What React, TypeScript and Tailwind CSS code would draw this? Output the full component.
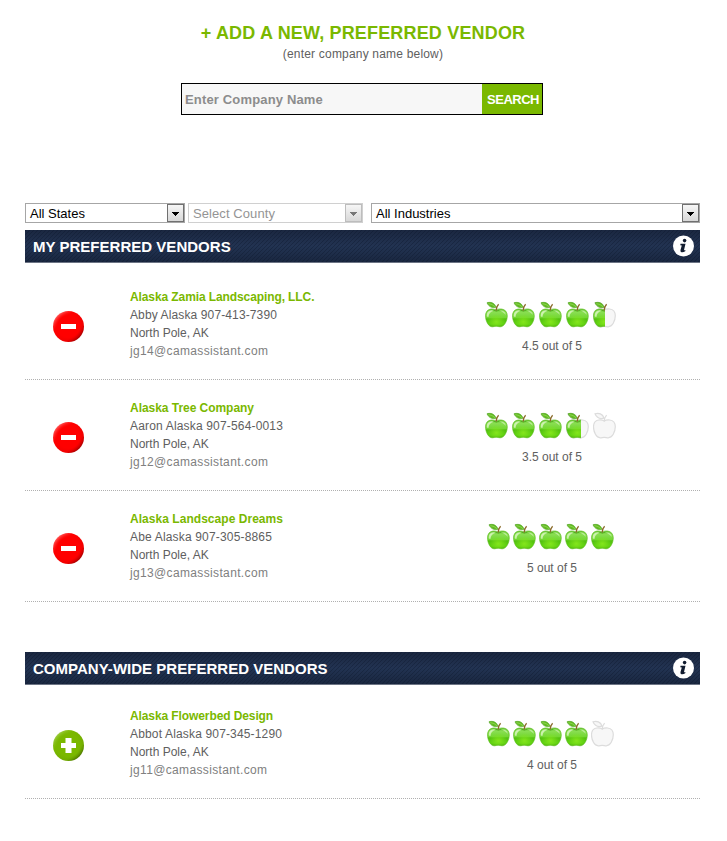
import React from "react";

type Fill = "full" | "half" | "empty";

function Apple({ fill, id, split }: { fill: Fill; id: string; split: number }) {
  const body =
    "M12.2 9 C10.4 8 8.6 7.8 7 8 C3.6 8.4 1.5 11 1.5 14.8 C1.5 20 4.4 25.8 8.2 25.8 C9.8 25.8 10.6 25.3 12.2 25.3 C13.8 25.3 14.6 25.8 16.2 25.8 C20.2 25.8 23.3 20 23.3 14.8 C23.3 11 21 8.4 17.6 8 C15.8 7.8 14 8 12.2 9 Z";
  const leaf = "M3 1.8 C6.6 0.6 10.8 1.8 12 6.2 C8.4 7.2 4.8 6 3 1.8 Z";
  const stem = "M12.2 9.4 C12.2 6.8 12.8 5 14.6 3.2";
  return (
    <svg width="24" height="27" viewBox="1 0 24 27" className="block">
      <defs>
        <linearGradient id={`${id}-g`} x1="0" y1="0" x2="0" y2="1">
          <stop offset="0" stopColor="#6cc838" />
          <stop offset="0.2" stopColor="#88de50" />
          <stop offset="0.48" stopColor="#74d735" />
          <stop offset="0.56" stopColor="#53c010" />
          <stop offset="0.85" stopColor="#5cd010" />
          <stop offset="1" stopColor="#43a80a" />
        </linearGradient>
        <radialGradient id={`${id}-r`} cx="0.5" cy="0.72" r="0.42">
          <stop offset="0" stopColor="#84e61c" />
          <stop offset="1" stopColor="#84e61c" stopOpacity="0" />
        </radialGradient>
        <clipPath id={`${id}-c`}>
          <rect x="0" y="0" width={fill === "half" ? split + 1 : 26} height="27" />
        </clipPath>
      </defs>
      {fill !== "full" && (
        <g fill="#f7f7f7" stroke="#dcdcdc" strokeWidth="1.2">
          <path d={body} />
          <path d={leaf} />
          <path d={stem} fill="none" />
        </g>
      )}
      {fill !== "empty" && (
        <g>
          <g clipPath={`url(#${id}-c)`}>
            <path d={body} fill={`url(#${id}-g)`} stroke="#57b81a" strokeWidth="0.6" />
            <path d={body} fill={`url(#${id}-r)`} />
            <path d="M2.8 15.5 C2.6 11.6 4.4 9.4 7.6 9.3 C8.4 9.3 8.8 9.5 9.4 10 C6.4 10.8 4.8 12.5 4.4 16 Z" fill="#f2ffe4" opacity="0.65" />
            <path d="M16 9.8 C18.8 9 21.4 10.6 21.8 14 C20 11.8 18.4 10.8 16 9.8 Z" fill="#f2ffe4" opacity="0.5" />
            <path d="M9.6 9.2 Q12.4 11 15.2 9.2" stroke="#4aa51a" strokeWidth="0.8" fill="none" />
          </g>
          <path d={leaf} fill="#63bd22" stroke="#469e14" strokeWidth="0.6" />
          <path d="M4.4 2.6 Q8.4 3 11.2 5.8" stroke="#94d65a" strokeWidth="0.8" fill="none" />
          <path d={stem} fill="none" stroke="#8a6a2a" strokeWidth="1.3" />
        </g>
      )}
    </svg>
  );
}

function Rating({ value, id }: { value: number; id: string }) {
  const whole = Number.isInteger(value);
  const split = value > 4 ? 12 : 15;
  return (
    <div className="flex w-[132px] flex-col items-center pt-8">
      <div className={whole ? "flex gap-[2px]" : "flex gap-[3px]"}>
        {[0, 1, 2, 3, 4].map((i) => (
          <Apple
            key={i}
            id={`${id}-${i}`}
            split={split}
            fill={value >= i + 1 ? "full" : value > i ? "half" : "empty"}
          />
        ))}
      </div>
      <div className="mt-[9px] pl-[2px] leading-[18px]">{value} out of 5</div>
    </div>
  );
}

function RoundButton({ kind, id }: { kind: "add" | "remove"; id: string }) {
  const add = kind === "add";
  return (
    <button aria-label={kind} className="mt-[42px] ml-7 block size-[31px]">
      <svg width="31" height="31" viewBox="0 0 31 31">
        <defs>
          <linearGradient id={id} x1="0.1" y1="0.1" x2="0.9" y2="0.9">
            <stop offset="0" stopColor={add ? "#a4d04c" : "#ff6a6a"} />
            <stop offset="0.28" stopColor={add ? "#7ab800" : "#ff0000"} />
            <stop offset="0.75" stopColor={add ? "#72ac00" : "#f00000"} />
            <stop offset="1" stopColor={add ? "#456b00" : "#920000"} />
          </linearGradient>
          <radialGradient id={`${id}-f`}>
            <stop offset="0.72" stopColor={add ? "#7ab800" : "#ff0000"} />
            <stop offset="1" stopColor={add ? "#7ab800" : "#ff0000"} stopOpacity="0" />
          </radialGradient>
        </defs>
        <circle cx="15.5" cy="15.5" r="15.5" fill={`url(#${id})`} />
        <circle cx="15.5" cy="15.5" r="15" fill={`url(#${id}-f)`} />
        <rect x="8" y="13" width="15" height="5" fill="#fff" />
        {add && <rect x="12.5" y="8" width="6" height="15" fill="#fff" />}
      </svg>
    </button>
  );
}

type Vendor = {
  name: string;
  nameClass: string;
  contact: string;
  contactClass: string;
  email: string;
  rating: number;
};

const preferred: Vendor[] = [
  { name: "Alaska Zamia Landscaping, LLC.", nameClass: "tracking-[-0.1px]", contact: "Abby Alaska 907-413-7390", contactClass: "tracking-[0.12px]", email: "jg14@camassistant.com", rating: 4.5 },
  { name: "Alaska Tree Company", nameClass: "tracking-[-0.04px]", contact: "Aaron Alaska 907-564-0013", contactClass: "tracking-[0.17px]", email: "jg12@camassistant.com", rating: 3.5 },
  { name: "Alaska Landscape Dreams", nameClass: "tracking-[0.04px]", contact: "Abe Alaska 907-305-8865", contactClass: "tracking-[0.17px]", email: "jg13@camassistant.com", rating: 5 },
];

const companyWide: Vendor[] = [
  { name: "Alaska Flowerbed Design", nameClass: "tracking-[-0.1px]", contact: "Abbot Alaska 907-345-1290", contactClass: "tracking-[0.16px]", email: "jg11@camassistant.com", rating: 4 },
];

function VendorRow({ v, kind }: { v: Vendor; kind: "add" | "remove" }) {
  const id = v.email.slice(0, 4);
  return (
    <li className="flex h-[111px] border-b border-dotted border-[#b0b0b0]">
      <div className="w-[105px]">
        <RoundButton kind={kind} id={`${id}-b`} />
      </div>
      <div className="w-[355px] pt-[19px] leading-[18px] whitespace-nowrap">
        <div className="font-bold text-[#7ab800]"><span className={v.nameClass}>{v.name}</span></div>
        <div><span className={v.contactClass}>{v.contact}</span></div>
        <div>North Pole, AK</div>
        <div className="tracking-[0.35px] text-[#808080]">{v.email}</div>
      </div>
      <Rating value={v.rating} id={id} />
    </li>
  );
}

function SectionBar({ title }: { title: string }) {
  return (
    <div className="flex h-[33px] items-center justify-between border-b border-[#6d7585] bg-[repeating-linear-gradient(135deg,rgba(10,20,40,0.35)_0px,rgba(10,20,40,0.35)_1px,transparent_1px,transparent_2.83px),linear-gradient(#1a2740,#223352_50%,#1a2740)] pr-[6px] pl-2">
      <h2 className="pt-[2px] text-[15px] font-bold tracking-[0.02px] text-white">{title}</h2>
      <svg width="22" height="22" viewBox="0 0 22 22" className="-mt-px">
        <circle cx="11.5" cy="11" r="10.5" fill="#fff" />
        <circle cx="12.6" cy="5.6" r="1.8" fill="#111c30" />
        <path d="M8.5 8.8 H13.5 L12 15 Q12.1 15.7 13.5 14.9 L13.2 16.2 Q11.3 17.6 9.4 17.2 Q8.1 16.8 8.5 15 L9.8 10.4 L8.3 10.3 Z" fill="#111c30" />
      </svg>
    </div>
  );
}

function Select({ label, className, disabled }: { label: string; className: string; disabled?: boolean }) {
  return (
    <div className={`flex h-5 items-center justify-between border bg-white pl-1 text-[13px] ${disabled ? "border-[#d0d0d0] text-[#949494]" : "border-[#a6a6a6] text-black"} ${className}`}>
      <span className="pt-px">{label}</span>
      <span className={`flex h-[18px] w-[17px] items-center justify-center border bg-linear-to-b from-[#f6f6f6] to-[#d8d8d8] ${disabled ? "border-[#bdbdbd]" : "border-[#707070]"}`}>
        <svg width="7" height="4" viewBox="0 0 7 4" shapeRendering="crispEdges" className="mt-px">
          <path d="M0 0H7L3.5 4Z" fill={disabled ? "#777" : "#000"} />
        </svg>
      </span>
    </div>
  );
}

export default function App() {
  return (
    <main className="flex h-[841px] w-[727px] flex-col bg-white pr-[27px] pl-[25px] font-['Liberation_Sans',Arial,sans-serif] text-[12px] text-[#606060]">
      <header className="flex flex-col items-center pt-[22px] pl-px">
        <h1 className="text-[18px] leading-[22px] font-bold tracking-[0.17px] text-[#7ab800]">+ ADD A NEW, PREFERRED VENDOR</h1>
        <p className="leading-[20px] tracking-[0.19px]">(enter company name below)</p>
      </header>
      <form className="mt-[19px] ml-[156px] flex h-8 w-[362px] border border-black bg-[#f7f7f7]">
        <div className="flex flex-1 items-center pt-px pl-[3px] text-[13px] font-bold tracking-[0.16px] text-[#8c8c8c]">Enter Company Name</div>
        <button type="button" className="w-[60px] bg-[#7ab800] pt-px pl-[2px] text-[13px] font-bold tracking-[-0.5px] text-white">SEARCH</button>
      </form>
      <div className="mt-[88px] flex">
        <Select label="All States" className="w-40" />
        <Select label="Select County" className="ml-[3px] w-[175px] tracking-[0.08px]" disabled />
        <Select label="All Industries" className="ml-2 w-[329px]" />
      </div>
      <section className="mt-[7px]">
        <SectionBar title="MY PREFERRED VENDORS" />
        <ul className="pt-[6px]">
          {preferred.map((v) => <VendorRow key={v.email} v={v} kind="remove" />)}
        </ul>
      </section>
      <section className="mt-[50px]">
        <SectionBar title="COMPANY-WIDE PREFERRED VENDORS" />
        <ul className="pt-[3px]">
          {companyWide.map((v) => <VendorRow key={v.email} v={v} kind="add" />)}
        </ul>
      </section>
    </main>
  );
}
